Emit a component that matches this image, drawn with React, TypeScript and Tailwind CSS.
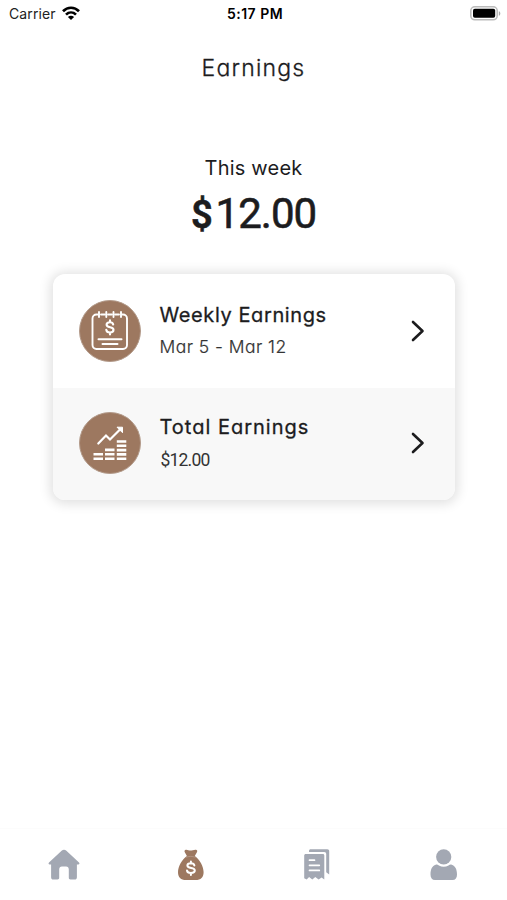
import type { ReactNode } from "react";

interface RowProps {
  icon: ReactNode;
  title: ReactNode;
  detail: ReactNode;
  className: string;
}

const WifiIcon = () => (
  <svg width="18" height="14" viewBox="0 0 18 14" fill="none" stroke="#000" strokeWidth="2.7">
    <path d="M1 5.2C5.6.6 12.4.6 17 5.2" />
    <path d="M4 8.6c2.9-2.8 7.1-2.8 10 0" />
    <path d="M9 14 5.9 10.9c1.8-1.7 4.4-1.7 6.2 0Z" fill="#000" stroke="none" />
  </svg>
);

const BatteryIcon = () => (
  <svg width="31" height="15" viewBox="0 0 31 15">
    <rect x="0.8" y="0.8" width="26.4" height="13" rx="4" fill="#fff" stroke="#bbb" strokeWidth="1.6" />
    <rect x="3" y="2.8" width="22.2" height="9" rx="1.8" fill="#000" />
    <path d="M28.8 5.2c2 .5 2 4.1 0 4.6Z" fill="#aaa" />
  </svg>
);

const ChevronIcon = () => (
  <svg width="14" height="22" viewBox="0 0 14 22" fill="none" stroke="#1c1c1e" strokeWidth="2.6" strokeLinecap="round" strokeLinejoin="round">
    <path d="m2 2 9.5 9L2 20" />
  </svg>
);

const CalendarIcon = () => (
  <svg width="62" height="62" viewBox="0 0 62 62" fill="none" stroke="#fff" strokeWidth="1.9" strokeLinecap="round">
    <circle cx="31" cy="31" r="30.5" fill="#9d7860" stroke="#b39b8b" strokeWidth="1" />
    <path d="M18.500 14.500h-1a4 4 0 0 0-4 4V45a4 4 0 0 0 4 4H44a4 4 0 0 0 4-4V18.500a4 4 0 0 0-4-4h-1M22 14.500h4M29 14.500h4M36 14.500h4" />
    <path d="M20 12v5M27.300 12v5M34.500 12v5M42 12v5" />
    <path d="M34.200 24.500c-.3-1.500-1.500-2.300-3.300-2.300-2 0-3.300 1.100-3.300 2.600 0 3.600 6.900 1.500 6.900 5 0 1.700-1.300 2.700-3.500 2.700-2 0-3.500-1-3.700-2.600M31 20.200v2M31 32.500v1.900" strokeWidth="2.1" />
    <path d="M19.500 39.300h23M23.500 44h15" strokeWidth="2" />
  </svg>
);

const ChartIcon = () => (
  <svg width="62" height="62" viewBox="0 0 62 62" fill="none">
    <circle cx="31" cy="31" r="30.5" fill="#9d7860" stroke="#b39b8b" strokeWidth="1" />
    <path d="m19.300 31.500 7.700-8 4 4L41 17.500" stroke="#fff" strokeWidth="2.2" strokeLinecap="round" />
    <path d="M38 15.200h5.500v5.500Z" fill="#fff" stroke="#fff" strokeWidth="1" />
    <path
      d="M14.500 42.200H24M14.500 46.700H24M26 37.900h9.500M26 42.200h9.500M26 46.700h9.500M37.800 29.500h9.500M37.800 33.800h9.500M37.800 38.100h9.500M37.800 42.400h9.500M37.800 46.700h9.500"
      stroke="#fff"
      strokeWidth="2.6"
    />
  </svg>
);

const HomeIcon = () => (
  <svg width="32" height="32" viewBox="0 0 32 32" fill="#a3a8b3">
    <path d="M13.600 1.700 1 13.500c-.9.900-.4 1.900.7 1.900h1.400v12.800c0 1.400.8 2.300 2.200 2.300h4.200c1.100 0 1.700-.6 1.700-1.700v-8.300c0-1.900 1-3 2.700-3h4.200c1.700 0 2.700 1.100 2.700 3v8.300c0 1.100.6 1.700 1.700 1.700h4.200c1.400 0 2.200-.9 2.200-2.300V15.400h1.400c1.100 0 1.600-1 .7-1.900L18.400 1.700c-1.500-1.400-3.300-1.400-4.800 0Z" />
  </svg>
);

const MoneyBagIcon = () => (
  <svg width="28" height="32" viewBox="0 0 28 32">
    <path d="M8.200 1c2-.7 3.300.6 5.200.6S17.700.3 19.600 1c.9.400.8 1.300.3 2.200L17.800 7c5 3.500 8.800 10.500 8.800 16 0 5.500-2.800 8-8 8H9c-5.200 0-8-2.500-8-8 0-5.500 3.900-12.500 8.900-16L7.800 3.200c-.5-.9-.5-1.800.4-2.200Z" fill="#9d7860" />
    <path d="M9 8.300c2.800-1.200 6.400-1.200 9.600 0" stroke="#c4ad9e" strokeWidth=".5" fill="none" />
    <path d="M17.400 16.500c-.3-1.500-1.600-2.200-3.500-2.200-2.200 0-3.500.9-3.500 2.300 0 3.600 7.400 1.400 7.400 4.900 0 1.500-1.500 2.400-3.900 2.400-2.200 0-3.700-.9-3.900-2.400M13.900 12.500v2M13.900 24v1.900" stroke="#fff" strokeWidth="2" strokeLinecap="round" fill="none" />
  </svg>
);

const ReceiptIcon = () => (
  <svg width="28" height="32" viewBox="0 0 28 32" fill="#a3a8b3">
    <path d="M6 3V2C6 .9 6.700.3 7.700.3h16.600c1.200 0 1.900.7 1.900 1.900v23.300l-3-2.300V5c0-1.300-.7-2-2-2Z" />
    <path d="M2.800 5h17c1 0 1.500.6 1.500 1.500v24l-2.700-2-3 2-3.300-2.400-3 2.400-3.200-2.400-2.400 2.400-2.500-1.200V6.500C1.200 5.600 1.800 5 2.800 5Z" />
    <path d="M6.500 11.200h5M6.500 16.300h9.800M6.500 21.400h9.800" stroke="#fff" strokeWidth="1.7" strokeLinecap="round" />
  </svg>
);

const PersonIcon = () => (
  <svg width="28" height="32" viewBox="0 0 28 32" fill="#a3a8b3">
    <circle cx="13.7" cy="7.9" r="7.6" />
    <path d="M5.700 15.700c1.300-.4 2.200.2 3.200.8 3 1.800 6.600 1.800 9.600 0 1-.6 1.900-1.200 3.200-.8 3.500 1 5.300 4.500 5.300 9.700 0 3.500-1.500 5.600-4.500 5.600H5C2 31 .5 28.900.5 25.400c0-5.200 1.700-8.700 5.200-9.700Z" />
  </svg>
);

function EarningsRow({ icon, title, detail, className }: RowProps) {
  return (
    <button className={`flex w-full items-center pl-[26px] pr-[30px] text-left ${className}`}>
      {icon}
      <div className="ml-[19px] flex-1">
        {title}
        {detail}
      </div>
      <ChevronIcon />
    </button>
  );
}

export default function App() {
  return (
    <div className="flex h-[900px] w-[507px] flex-col overflow-hidden bg-white font-['Inter',sans-serif] text-[#1c1c1e] [font-feature-settings:'cv11']">
      <header className="grid h-[26px] grid-cols-3 items-center pl-[9px] pr-[6px] text-black">
        <div className="flex items-center gap-[6px]">
          <span className="text-[14px] tracking-[0.1px] text-[#222] [font-feature-settings:normal]">Carrier</span>
          <WifiIcon />
        </div>
        <span className="text-center text-[14px] font-semibold tracking-[0.5px]">5:17 PM</span>
        <div className="flex justify-end">
          <BatteryIcon />
        </div>
      </header>

      <h1 className="mt-[26px] text-center text-[23px] font-light leading-8 tracking-[1.2px] [-webkit-text-stroke:0.3px]">Earnings</h1>

      <main className="flex flex-1 flex-col items-center pt-[70px]">
        <p className="text-[20px] leading-7 tracking-[0.2px]">This week</p>
        <p className="mt-[2px] font-['Roboto',sans-serif] text-[42px] leading-[60px] tracking-[-1px] [-webkit-text-stroke:0.6px]">
          <span className="mr-[4px] text-[38px] font-semibold">$</span>12.00
        </p>

        <section className="mt-[29px] w-[402px] overflow-hidden rounded-xl bg-white shadow-[0_1px_12px_3px_rgba(0,0,0,0.12)]">
          <EarningsRow
            className="h-[114px]"
            icon={<CalendarIcon />}
            title={<h2 className="text-[20px] font-normal leading-7 tracking-[0.6px] [-webkit-text-stroke:0.3px]">Weekly Earnings</h2>}
            detail={<p className="mt-1 text-[17.5px] font-light leading-7 tracking-[0.45px] text-[#333] [-webkit-text-stroke:0.2px]">Mar 5 - Mar 12</p>}
          />
          <EarningsRow
            className="h-[112px] bg-[#f8f8f8] pb-[2px]"
            icon={<ChartIcon />}
            title={<h2 className="text-[20px] font-normal leading-7 tracking-[1px] [-webkit-text-stroke:0.3px]">Total Earnings</h2>}
            detail={<p className="mt-[5px] pl-px font-['Roboto',sans-serif] text-[17.5px] leading-7 tracking-[-0.8px] text-[#333]">$12.00</p>}
          />
        </section>
      </main>

      <nav className="grid h-[72px] grid-cols-4 justify-items-center border-t border-[#fcfcfc] pl-[1px] pt-5">
        <button className="flex h-8 w-8 justify-center"><HomeIcon /></button>
        <button className="flex h-8 w-8 justify-center"><MoneyBagIcon /></button>
        <button className="flex h-8 w-8 justify-center"><ReceiptIcon /></button>
        <button className="flex h-8 w-8 justify-center"><PersonIcon /></button>
      </nav>
    </div>
  );
}
